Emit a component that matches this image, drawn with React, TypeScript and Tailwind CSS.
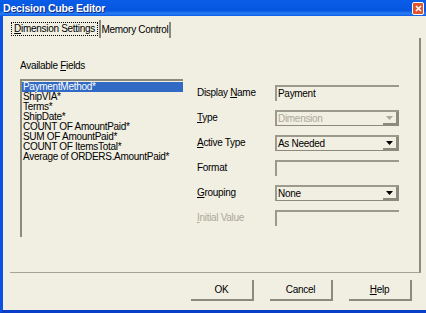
const fields = [
  'PaymentMethod*',
  'ShipVIA*',
  'Terms*',
  'ShipDate*',
  'COUNT OF AmountPaid*',
  'SUM OF AmountPaid*',
  'COUNT OF ItemsTotal*',
  'Average of ORDERS.AmountPaid*',
];

const Arrow = ({ disabled }: { disabled?: boolean }) => (
  <div className="w-[15px] h-[13px] flex items-center justify-center border-r-2 border-b-2 border-[#8c8a7c]">
    <svg width="7" height="4" viewBox="0 0 7 4">
      <path d="M0 0h7L3.5 4z" fill={disabled ? '#aca899' : '#000'} />
    </svg>
  </div>
);

const TextBox = ({ value, disabled }: { value?: string; disabled?: boolean }) => (
  <div className="w-[124px] h-[16px] border-l-2 border-t-2 border-[#9c9a8c] flex items-center pl-[1px]">
    <span className={disabled ? 'text-[#aca899]' : 'text-black'}>{value}</span>
  </div>
);

const Combo = ({ value, disabled }: { value: string; disabled?: boolean }) => (
  <div className="w-[124px] h-[16px] border border-[#8c8a7c] border-l-2 border-t-2 border-l-[#9c9a8c] border-t-[#9c9a8c] flex items-center justify-between pl-[1px]">
    <span className={disabled ? 'text-[#aca899]' : 'text-black'}>{value}</span>
    <Arrow disabled={disabled} />
  </div>
);

const Row = ({ label, children }: { label: React.ReactNode; children: React.ReactNode }) => (
  <div className="flex items-center h-[16px]">
    <div className="w-[78px]">{label}</div>
    {children}
  </div>
);

const Btn = ({ children }: { children: React.ReactNode }) => (
  <div className="w-[63px] h-[21px] flex items-center justify-center border-r-2 border-b-2 border-[#8c8a7c]">
    {children}
  </div>
);

export default function App() {
  return (
    <div className="w-[426px] h-[313px] flex flex-col bg-[#f1efe2] text-[10px] leading-[12px] tracking-[-0.3px] text-black font-['Liberation_Sans',Arial,sans-serif] overflow-hidden">
      <div className="h-[16px] shrink-0 flex items-center justify-between pl-[3px] pr-[2px] bg-[linear-gradient(to_bottom,#0a5de8_0%,#0556e0_65%,#2a7cf2_85%,#0a5de8_100%)]">
        <span className="text-white font-bold text-[10.5px] tracking-[-0.2px] [text-shadow:1px_1px_0_#0a2a8a]">Decision Cube Editor</span>
        <div className="w-[12px] h-[13px] rounded-[2px] border border-white bg-[#e0542e] flex items-center justify-center">
          <svg width="7" height="7" viewBox="0 0 7 7">
            <path d="M1 1l5 5M6 1l-5 5" stroke="#fff" strokeWidth="1.6" />
          </svg>
        </div>
      </div>

      <div className="flex-1 flex flex-col border-l-[3px] border-b-[3px] border-l-[#0b52e4] border-b-[#0a3dc8]">
        <div className="flex items-end h-[18px] mt-[4px] ml-[7px]">
          <div className="h-[18px] w-[91px] border-r-2 border-[#8c8a7c] flex items-center justify-center">
            <div className="border border-dotted border-black px-[1px] h-[14px] w-[87px] flex items-center justify-center">
              <span><span className="underline">D</span>imension Settings</span>
            </div>
          </div>
          <div className="h-[16px] w-[70px] border-r-2 border-[#8c8a7c] flex items-center justify-center">
            Memory Control
          </div>
        </div>

        <div className="ml-[7px] w-[411px] h-[235px] border-r-2 border-b border-r-[#8c8a7c] border-b-[#a5a392] flex gap-[14px] pl-[10px] pt-[22px]">
          <div className="flex flex-col w-[163px]">
            <span className="h-[12px]">Available <span className="underline">F</span>ields</span>
            <div className="mt-[7px] h-[158px] border-l-2 border-t-2 border-[#8c8a7c] pt-[1px]">
              {fields.map((f, i) => (
                <div
                  key={f}
                  className={`h-[10px] leading-[10px] pl-[1px] whitespace-nowrap ${i === 0 ? 'bg-[#316ac5] text-white' : ''}`}
                >
                  {f}
                </div>
              ))}
            </div>
          </div>

          <div className="flex flex-col gap-[9px] pt-[25px]">
            <Row label={<span>Display <span className="underline">N</span>ame</span>}>
              <TextBox value="Payment" />
            </Row>
            <Row label={<span><span className="underline">T</span>ype</span>}>
              <Combo value="Dimension" disabled />
            </Row>
            <Row label={<span><span className="underline">A</span>ctive Type</span>}>
              <Combo value="As Needed" />
            </Row>
            <Row label="Format">
              <TextBox />
            </Row>
            <Row label={<span><span className="underline">G</span>rouping</span>}>
              <Combo value="None" />
            </Row>
            <Row label={<span className="text-[#aca899]"><span className="underline">I</span>nitial Value</span>}>
              <TextBox disabled />
            </Row>
          </div>
        </div>

        <div className="flex gap-[16px] ml-[188px] mt-[7px]">
          <Btn>OK</Btn>
          <Btn>Cancel</Btn>
          <Btn><span><span className="underline">H</span>elp</span></Btn>
        </div>
      </div>
    </div>
  );
}
